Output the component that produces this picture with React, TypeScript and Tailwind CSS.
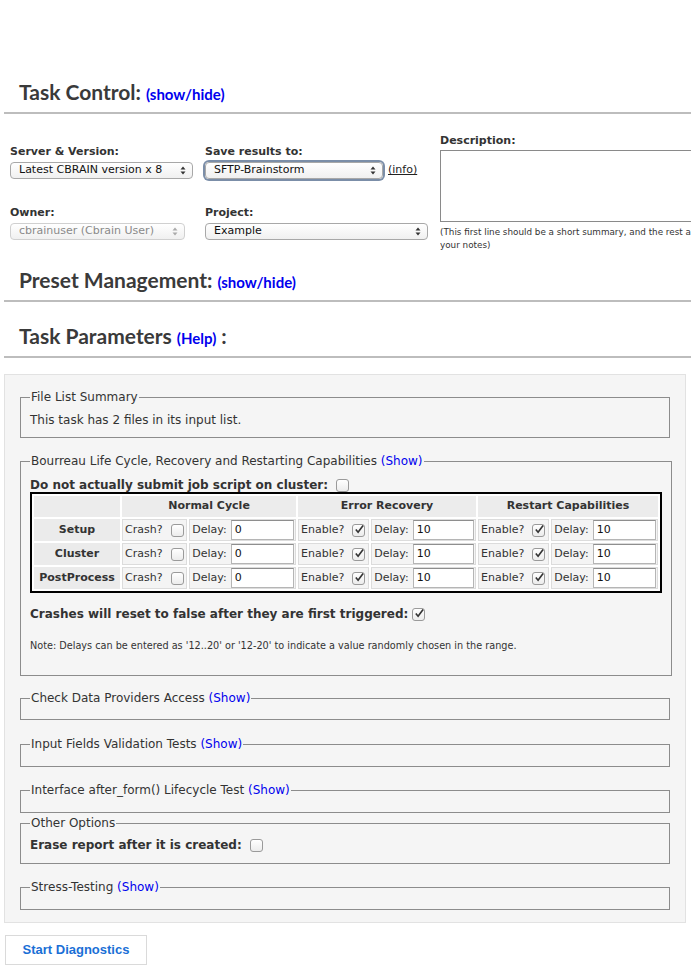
import React from "react";

const VERD = "font-['DejaVu_Sans',Verdana,sans-serif]";
const HEAD = "font-['Lato','DejaVu_Sans_Condensed',sans-serif]";

function Check({ on = false }: { on?: boolean }) {
  return (
    <span className="inline-flex items-center justify-center w-[13px] h-[13px] rounded-[3px] border border-[#9a9a9a] bg-gradient-to-b from-white to-[#ececec] align-middle">
      {on && (
        <svg width="11" height="11" viewBox="0 0 11 11" className="-mt-[2px] ml-[1px]">
          <path d="M2 5.5 L4.5 8.5 L10 1" fill="none" stroke="#333" strokeWidth="1.8" />
        </svg>
      )}
    </span>
  );
}

function Arrows({ color = "#333" }: { color?: string }) {
  return (
    <svg width="6" height="9" viewBox="0 0 6 9">
      <path d="M0.5 3.5 L3 0.5 L5.5 3.5 Z" fill={color} />
      <path d="M0.5 5.5 L3 8.5 L5.5 5.5 Z" fill={color} />
    </svg>
  );
}

function Select({ label, width, focus = false, disabled = false }: { label: string; width: string; focus?: boolean; disabled?: boolean }) {
  return (
    <div
      className={`${width} h-[17px] rounded-[4px] border flex items-center justify-between pl-[8px] pr-[6px] text-[11px] bg-gradient-to-b from-white to-[#f0f0f0] ${
        disabled ? "border-[#d0d0d0] text-[#8a8a8a]" : "border-[#a8a8a8] text-[#111]"
      } ${focus ? "shadow-[0_0_0_2px_#7b8ea8]" : ""}`}
    >
      <span>{label}</span>
      <Arrows color={disabled ? "#aaa" : "#333"} />
    </div>
  );
}

function Heading({ title, link, colon = false }: { title: string; link: string; colon?: boolean }) {
  return (
    <div className="ml-[4px] border-b-2 border-[#bdbdbd] pb-[5px]">
      <div className="pl-[15px] flex items-baseline gap-[5px] leading-[26px]">
        <span className={`${HEAD} text-[21px] font-bold text-[#3a3a3a]`}>{title}</span>
        <span className={`${HEAD} text-[15px] font-bold text-[#0000ee]`}>{link}</span>
        {colon && <span className={`${HEAD} text-[21px] font-bold text-[#3a3a3a]`}>:</span>}
      </div>
    </div>
  );
}

function Fieldset({ legend, show = false, children, className = "" }: { legend: string; show?: boolean; children?: React.ReactNode; className?: string }) {
  return (
    <fieldset className={`border border-[#8c8c8c] mx-[15px] px-[9px] ${className}`}>
      <legend className="px-[1px] text-[12px] text-[#333] leading-[16px]">
        {legend}
        {show && <span className="text-[#0000ee]"> (Show)</span>}
      </legend>
      {children}
    </fieldset>
  );
}

const rows = ["Setup", "Cluster", "PostProcess"];

function Input({ value, width }: { value: string; width: string }) {
  return (
    <div className={`${width} h-[20px] bg-white border border-[#b5b5b5] border-t-[#8e8e8e] px-[3px] text-[11px] leading-[18px] text-[#111]`}>
      {value}
    </div>
  );
}

export default function App() {
  return (
    <div className={`${VERD} w-[691px] min-h-[969px] bg-white text-[#333] overflow-hidden`}>
      <div className="pt-[79px]">
        <Heading title="Task Control:" link="(show/hide)" />
      </div>

      <div className="flex pl-[10px] pt-[20px] h-[148px] overflow-hidden">
        <div className="w-[195px] shrink-0">
          <div className="text-[11px] font-bold text-[#333] pt-[11px] leading-[14px]">Server &amp; Version:</div>
          <div className="mt-[3px]">
            <Select label="Latest CBRAIN version x 8" width="w-[183px]" />
          </div>
          <div className="text-[11px] font-bold text-[#333] mt-[27px] leading-[14px]">Owner:</div>
          <div className="mt-[3px]">
            <Select label="cbrainuser (Cbrain User)" width="w-[175px]" disabled />
          </div>
        </div>
        <div className="w-[235px] shrink-0">
          <div className="text-[11px] font-bold text-[#333] pt-[11px] leading-[14px]">Save results to:</div>
          <div className="mt-[3px] flex items-center gap-[5px]">
            <Select label="SFTP-Brainstorm" width="w-[178px]" focus />
            <span className="text-[11px] underline text-[#222]">(info)</span>
          </div>
          <div className="text-[11px] font-bold text-[#333] mt-[27px] leading-[14px]">Project:</div>
          <div className="mt-[3px]">
            <Select label="Example" width="w-[223px]" />
          </div>
        </div>
        <div className="w-[251px] shrink-0 overflow-hidden">
          <div className="text-[11px] font-bold text-[#333] leading-[14px]">Description:</div>
          <div className="mt-[2px] h-[72px] w-[270px] border border-[#8a8a8a] bg-white" />
          <div className="mt-[4px] text-[8.8px] leading-[13px] text-[#333]">
            (This first line should be a short summary, and the rest a
            <br />
            your notes)
          </div>
        </div>
      </div>

      <div className="pt-[5px]">
        <Heading title="Preset Management:" link="(show/hide)" />
      </div>
      <div className="pt-[21px]">
        <Heading title="Task Parameters" link="(Help)" colon />
      </div>

      <div className="mt-[16px] ml-[4px] w-[682px] bg-[#f5f5f5] border border-[#e2e2e2] pt-[14px] pb-[12px]">
        <Fieldset legend="File List Summary" className="pb-[9px]">
          <div className="text-[12px] text-[#333] mt-[7px] leading-[16px]">This task has 2 files in its input list.</div>
        </Fieldset>

        <Fieldset legend="Bourreau Life Cycle, Recovery and Restarting Capabilities" show className="mt-[15px] pb-[23px]">
          <div className="text-[12px] font-bold text-[#333] mt-[9px] flex items-center gap-[8px] leading-[14px]">
            Do not actually submit job script on cluster: <Check />
          </div>
          <table className="mt-0 border-2 border-black bg-white border-separate border-spacing-[2px] text-[11px] w-[632px]">
            <thead>
              <tr className="h-[21px]">
                <th className="bg-[#ececec] w-[86px]" />
                <th colSpan={2} className="bg-[#ececec] font-bold text-[#333]">Normal Cycle</th>
                <th colSpan={2} className="bg-[#ececec] font-bold text-[#333]">Error Recovery</th>
                <th colSpan={2} className="bg-[#ececec] font-bold text-[#333]">Restart Capabilities</th>
              </tr>
            </thead>
            <tbody>
              {rows.map((r) => (
                <tr key={r} className="h-[22px]">
                  <td className="bg-[#ebebeb] font-bold text-center text-[#333]">{r}</td>
                  <td className="bg-[#f4f4f4] border border-[#dcdcdc] px-[2px] whitespace-nowrap">
                    <span className="inline-flex items-center gap-[8px]">Crash? <Check /></span>
                  </td>
                  <td className="bg-[#f4f4f4] border border-[#dcdcdc] pl-[2px]">
                    <span className="flex items-center gap-[4px]">Delay: <Input value="0" width="w-[63px]" /></span>
                  </td>
                  <td className="bg-[#f4f4f4] border border-[#dcdcdc] px-[2px] whitespace-nowrap">
                    <span className="inline-flex items-center gap-[8px]">Enable? <Check on /></span>
                  </td>
                  <td className="bg-[#f4f4f4] border border-[#dcdcdc] pl-[2px]">
                    <span className="flex items-center gap-[4px]">Delay: <Input value="10" width="w-[61px]" /></span>
                  </td>
                  <td className="bg-[#f4f4f4] border border-[#dcdcdc] px-[2px] whitespace-nowrap">
                    <span className="inline-flex items-center gap-[8px]">Enable? <Check on /></span>
                  </td>
                  <td className="bg-[#f4f4f4] border border-[#dcdcdc] pl-[2px]">
                    <span className="flex items-center gap-[4px]">Delay: <Input value="10" width="w-[63px]" /></span>
                  </td>
                </tr>
              ))}
            </tbody>
          </table>
          <div className="mt-[13px] text-[12px] font-bold text-[#333] flex items-center gap-[4px] leading-[16px]">
            Crashes will reset to false after they are first triggered: <Check on />
          </div>
          <div className="mt-[18px] text-[9.7px] text-[#333] leading-[12px]">
            Note: Delays can be entered as '12..20' or '12-20' to indicate a value randomly chosen in the range.
          </div>
        </Fieldset>

        <Fieldset legend="Check Data Providers Access" show className="mt-[14px] h-[30px]" />
        <Fieldset legend="Input Fields Validation Tests" show className="mt-[16px] h-[31px]" />
        <Fieldset legend="Interface after_form() Lifecycle Test" show className="mt-[15px] h-[31px]" />
        <Fieldset legend="Other Options" className="mt-[2px] pb-[10px]">
          <div className="mt-[6px] text-[12px] font-bold text-[#333] flex items-center gap-[8px] leading-[16px]">
            Erase report after it is created: <Check />
          </div>
        </Fieldset>
        <Fieldset legend="Stress-Testing" show className="mt-[15px] h-[31px]" />
      </div>

      <div className="mt-[12px] ml-[5px] w-[142px] h-[30px] border border-[#dadada] bg-white flex items-center justify-center">
        <span className="font-['Liberation_Sans',Arial,sans-serif] text-[13px] font-bold text-[#1a6fd6]">Start Diagnostics</span>
      </div>
    </div>
  );
}
